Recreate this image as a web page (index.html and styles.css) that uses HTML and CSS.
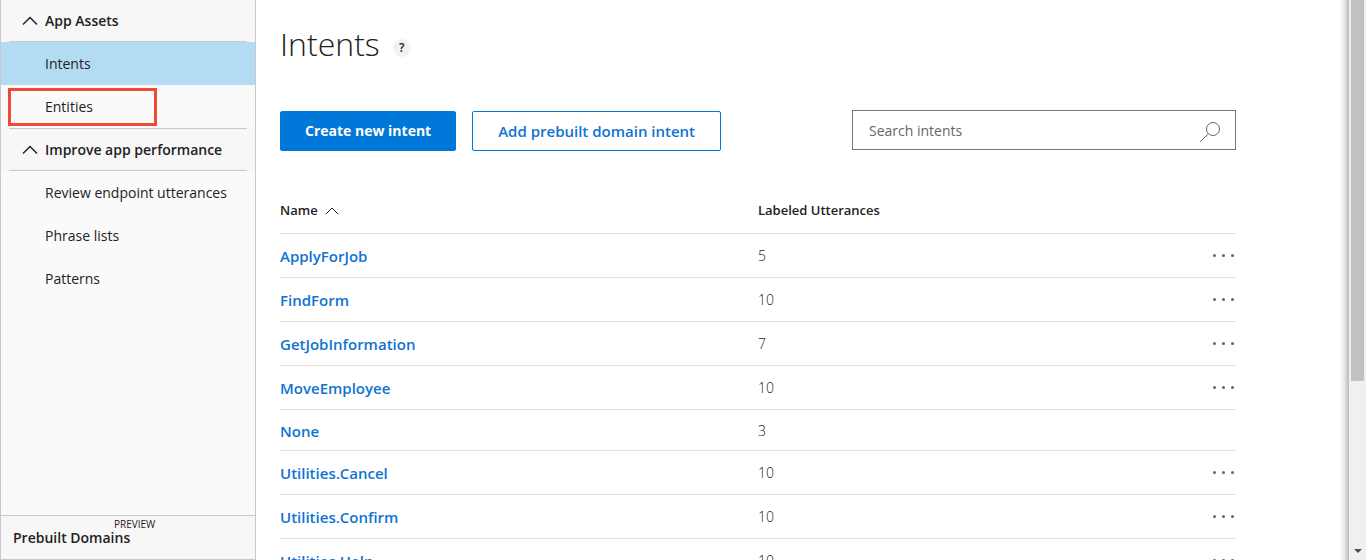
FILE: index.html
```html
<!DOCTYPE html>
<html lang="en">
<head>
<meta charset="utf-8">
<meta name="viewport" content="width=device-width, initial-scale=1">
<title>Intents</title>
<link rel="stylesheet" href="styles.css">
</head>
<body>
<div class="app">
  <nav class="sidebar" aria-label="App">
    <section class="group">
      <button class="group-head" type="button">
        <svg class="chevron" viewBox="0 0 16 10" aria-hidden="true"><path d="M1 8.500 8 1.500l7 7"/></svg>
        App Assets
      </button>
      <ul class="links">
        <li><a class="link current" href="#intents" aria-current="page">Intents</a></li>
        <li class="marked"><a class="link" href="#entities">Entities</a></li>
      </ul>
    </section>
    <section class="group ruled">
      <button class="group-head" type="button">
        <svg class="chevron" viewBox="0 0 16 10" aria-hidden="true"><path d="M1 8.500 8 1.500l7 7"/></svg>
        Improve app performance
      </button>
      <ul class="links">
        <li><a class="link" href="#review">Review endpoint utterances</a></li>
        <li><a class="link" href="#phrases">Phrase lists</a></li>
        <li><a class="link" href="#patterns">Patterns</a></li>
      </ul>
    </section>
    <a class="domains" href="#domains">
      <span class="preview">PREVIEW</span>
      <span class="domains-label">Prebuilt Domains</span>
    </a>
  </nav>

  <main class="content">
    <header class="title-row">
      <h1 class="title">Intents</h1>
      <button class="help" type="button" aria-label="Help">?</button>
    </header>
    <div class="toolbar">
      <button class="btn primary" type="button">Create new intent</button>
      <button class="btn outline" type="button">Add prebuilt domain intent</button>
      <label class="search">
        <input class="search-input" type="search" placeholder="Search intents" aria-label="Search intents">
        <svg class="search-icon" viewBox="0 0 22 22" aria-hidden="true"><circle cx="14" cy="8" r="6.500"/><path d="M9.300 12.700 1 21"/></svg>
      </label>
    </div>
    <table class="intents">
      <thead>
        <tr>
          <th class="col-name" scope="col">Name <svg class="sort" viewBox="0 0 14 8" aria-hidden="true"><path d="M1 7l6-6 6 6"/></svg></th>
          <th scope="col">Labeled Utterances</th>
          <th class="col-menu"></th>
        </tr>
      </thead>
      <tbody>
        <tr><td><a class="name" href="#i1">ApplyForJob</a></td><td>5</td><td class="menu"><button class="more" type="button" aria-label="More"><i></i><i></i><i></i></button></td></tr>
        <tr><td><a class="name" href="#i2">FindForm</a></td><td>10</td><td class="menu"><button class="more" type="button" aria-label="More"><i></i><i></i><i></i></button></td></tr>
        <tr><td><a class="name" href="#i3">GetJobInformation</a></td><td>7</td><td class="menu"><button class="more" type="button" aria-label="More"><i></i><i></i><i></i></button></td></tr>
        <tr><td><a class="name" href="#i4">MoveEmployee</a></td><td>10</td><td class="menu"><button class="more" type="button" aria-label="More"><i></i><i></i><i></i></button></td></tr>
        <tr><td><a class="name" href="#i5">None</a></td><td>3</td><td class="menu"></td></tr>
        <tr><td><a class="name" href="#i6">Utilities.Cancel</a></td><td>10</td><td class="menu"><button class="more" type="button" aria-label="More"><i></i><i></i><i></i></button></td></tr>
        <tr><td><a class="name" href="#i7">Utilities.Confirm</a></td><td>10</td><td class="menu"><button class="more" type="button" aria-label="More"><i></i><i></i><i></i></button></td></tr>
        <tr><td><a class="name" href="#i8">Utilities.Help</a></td><td>10</td><td class="menu"><button class="more" type="button" aria-label="More"><i></i><i></i><i></i></button></td></tr>
      </tbody>
    </table>
  </main>

  <div class="edge"></div>
  <div class="scrollbar" aria-hidden="true">
    <div class="thumb"></div>
    <svg class="arrow" viewBox="0 0 8 4"><path d="M0 0h8L4 4z"/></svg>
  </div>
</div>
</body>
</html>
```
FILE: styles.css
```css
*, *::before, *::after { box-sizing: border-box; }

body {
  margin: 0;
  font-family: "Open Sans", "Noto Sans", sans-serif;
  font-size: 14px;
  line-height: 20px;
  color: #222;
  background: #fff;
}

button { font: inherit; color: inherit; margin: 0; padding: 0; border: 0; background: none; cursor: pointer; }
a { color: inherit; text-decoration: none; }
svg { fill: none; stroke: currentColor; flex: none; }

.app { display: flex; height: 100vh; overflow: hidden; }

/* Sidebar */
.sidebar {
  display: flex;
  flex-direction: column;
  flex: 0 0 256px;
  background: #fafafa;
  border: solid #c8c8c8;
  border-width: 0 1px 1px;
}
.group-head {
  display: flex;
  align-items: center;
  gap: 7px;
  width: 100%;
  height: 42px;
  padding: 0 21px;
  font-weight: 600;
  background: #f7f7f7 linear-gradient(#c8c8c8, #c8c8c8) 8px 100% / calc(100% - 16px) 1px no-repeat;
}
.ruled::before { content: ""; display: block; height: 1px; margin: 0 8px; background: #c8c8c8; }
.chevron { width: 16px; height: 10px; stroke-width: 1.5; }
.links { margin: 0; padding: 0; list-style: none; }
.link { display: block; padding: 12px 8px 11px 44px; }
.current { background: #b3dbf2; }
.marked { position: relative; }
.marked::after {
  content: "";
  position: absolute;
  top: 3px;
  left: 7px;
  width: 149px;
  height: 38px;
  border: 3px solid #ee4a37;
  pointer-events: none;
}
.domains {
  display: flex;
  flex-direction: column;
  margin-top: auto;
  padding: 4px 12px 11px;
  font-weight: 600;
  background: #f7f7f7;
  border-top: 1px solid #c8c8c8;
}
.preview { padding-left: 101px; font-size: 10px; line-height: 8px; font-weight: 400; }

/* Content */
.content { flex: 1; min-width: 0; padding: 24px 113px 0 24px; overflow: hidden; }
.title-row { display: flex; align-items: center; gap: 13px; }
.title { margin: 0; font-size: 32px; line-height: 40px; font-weight: 300; }
.help {
  width: 18px;
  height: 18px;
  margin-top: 8px;
  border-radius: 50%;
  background: #f2f2f2;
  font-size: 12px;
  line-height: 18px;
  font-weight: 600;
}

.toolbar { display: flex; align-items: flex-end; gap: 16px; height: 41px; margin-top: 46px; }
.btn { height: 40px; padding: 0 25px; border: 1px solid #0078d7; border-radius: 2px; white-space: nowrap; }
.primary { padding: 0 24px; color: #fff; background: #0078d9; font-weight: 700; }
.outline { color: #0f73d2; font-size: 15px; font-weight: 600; }
.search {
  display: flex;
  align-items: center;
  align-self: flex-start;
  flex: 0 1 384px;
  height: 40px;
  margin-left: auto;
  padding: 0 14px 0 16px;
  border: 1px solid #767676;
  color: #666;
}
.search-input {
  flex: 1;
  min-width: 0;
  padding: 2px 0 0;
  border: 0;
  outline: 0;
  background: none;
  font: inherit;
  color: inherit;
  appearance: none;
}
.search-input::placeholder { color: #666; opacity: 1; }
.search-icon { width: 22px; height: 22px; margin-top: 4px; }

.intents { width: 100%; margin-top: 38px; border-collapse: collapse; table-layout: fixed; }
.intents th { height: 44px; padding: 0 0 2px; font-size: 13px; font-weight: 600; text-align: left; border-bottom: 1px solid #e1e1e1; }
.intents td { padding: 11px 0 9px; font-weight: 300; border-bottom: 1px solid #e1e1e1; }
.col-name { width: 50%; }
.col-menu { width: 60px; }
.sort { width: 14px; height: 8px; margin-left: 4px; }
.name { display: block; font-size: 15px; font-weight: 600; color: #0f73d2; }
.intents .menu { padding: 0; text-align: right; }
.more { display: inline-flex; align-items: center; justify-content: flex-end; gap: 6px; width: 32px; height: 43px; padding-right: 2px; vertical-align: top; }
.more i { width: 3px; height: 3px; border-radius: 50%; background: #666; }

/* Window edge and scroll track */
.edge { flex: 0 0 10px; margin-left: -10px; background: linear-gradient(to right, rgba(0, 0, 0, 0), rgba(0, 0, 0, .08) 50%, rgba(0, 0, 0, .28)); }
.scrollbar { display: flex; flex-direction: column; align-items: center; justify-content: space-between; flex: 0 0 17px; padding-bottom: 7px; background: #f0f0f0; }
.thumb { width: 13px; height: 68vh; background: #c1c1c1; }
.arrow { width: 8px; height: 4px; fill: #505050; stroke: none; }
```
